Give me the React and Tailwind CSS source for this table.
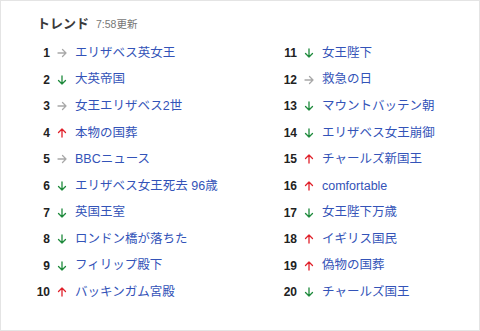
import React from "react";

const left = [
  [1, "same", "エリザベス英女王"],
  [2, "down", "大英帝国"],
  [3, "same", "女王エリザベス2世"],
  [4, "up", "本物の国葬"],
  [5, "same", "BBCニュース"],
  [6, "down", "エリザベス女王死去 96歳"],
  [7, "down", "英国王室"],
  [8, "down", "ロンドン橋が落ちた"],
  [9, "down", "フィリップ殿下"],
  [10, "up", "バッキンガム宮殿"],
];
const right = [
  [11, "down", "女王陛下"],
  [12, "same", "救急の日"],
  [13, "down", "マウントバッテン朝"],
  [14, "down", "エリザベス女王崩御"],
  [15, "up", "チャールズ新国王"],
  [16, "up", "comfortable"],
  [17, "down", "女王陛下万歳"],
  [18, "up", "イギリス国民"],
  [19, "up", "偽物の国葬"],
  [20, "down", "チャールズ国王"],
];

function Arrow({ dir }) {
  if (dir === "same") {
    return (
      <svg width="10" height="10" viewBox="0 0 10 10" fill="none" stroke="#a8a8a8" strokeWidth="1.3" strokeLinecap="round" strokeLinejoin="round">
        <path d="M1 5h8M5.5 1.5L9 5 5.5 8.5" />
      </svg>
    );
  }
  if (dir === "down") {
    return (
      <svg width="10" height="10" viewBox="0 0 10 10" fill="none" stroke="#1e8a3c" strokeWidth="1.3" strokeLinecap="round" strokeLinejoin="round">
        <path d="M5 1v8M1.5 5.5L5 9 8.5 5.5" />
      </svg>
    );
  }
  return (
    <svg width="10" height="10" viewBox="0 0 10 10" fill="none" stroke="#e0202a" strokeWidth="1.3" strokeLinecap="round" strokeLinejoin="round">
      <path d="M5 9V1M1.5 4.5L5 1 8.5 4.5" />
    </svg>
  );
}

function Row({ n, dir, text }) {
  return (
    <div className="flex items-center h-[26.55px]">
      <span className="w-[20px] text-right text-[12px] font-bold text-[#222]">{n}</span>
      <span className="ml-[7px] flex w-[10px] items-center justify-center">
        <Arrow dir={dir} />
      </span>
      <span className="ml-[8px] text-[12.5px] text-[#3353b8]">{text}</span>
    </div>
  );
}

export default function App() {
  return (
    <div
      className="w-[480px] h-[331px] border border-[#e4e4e4] bg-white pl-[29px] pt-[14px]"
      style={{ fontFamily: '"Liberation Sans", "Noto Sans CJK JP", sans-serif' }}
    >
      <div className="flex items-baseline pl-[7px] h-[18px]">
        <span className="text-[13px] font-bold text-[#3a3a3a] leading-[18px]">トレンド</span>
        <span className="ml-[7px] text-[10.5px] text-[#777]">7:58更新</span>
      </div>
      <div className="mt-[7px] grid grid-cols-[247px_1fr]">
        <div className="flex flex-col">
          {left.map(([n, d, t]) => (
            <Row key={n} n={n} dir={d} text={t} />
          ))}
        </div>
        <div className="flex flex-col">
          {right.map(([n, d, t]) => (
            <Row key={n} n={n} dir={d} text={t} />
          ))}
        </div>
      </div>
    </div>
  );
}
